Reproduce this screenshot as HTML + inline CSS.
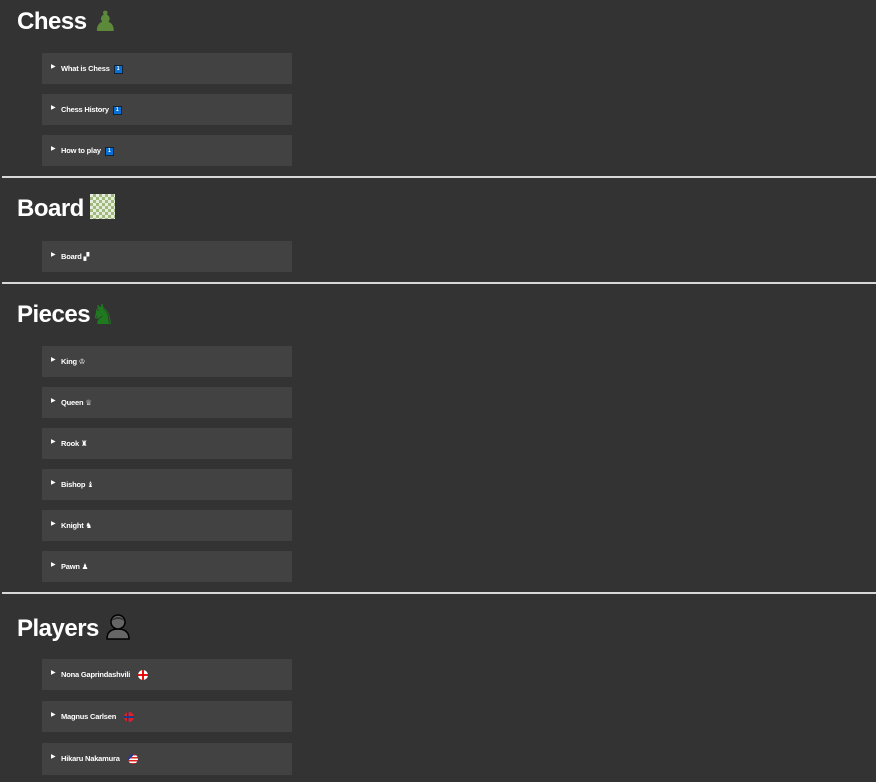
<!DOCTYPE html>
<html><head><meta charset="utf-8"><style>
body{margin:0;width:876px;height:782px;background:#333;overflow:hidden;font-family:"Liberation Sans","DejaVu Sans",sans-serif;color:#fff;position:relative}
h1{position:absolute;left:17px;margin:0;font-size:24px;font-weight:bold;line-height:30px;letter-spacing:-0.5px}
.it{position:absolute;left:42px;width:250px;height:31px;background:#424242;font-size:7.5px;font-weight:bold;line-height:31px;letter-spacing:-0.2px}
.it span.t{position:absolute;left:9px;top:-1px;font-size:6px}
.it span.x{position:absolute;left:19px}
.hr{position:absolute;left:2px;right:0;height:2px;background:#d8d8d8}
.b{display:inline-block;width:7px;height:7px;background:#0a6fd6;border:1px solid #123;vertical-align:middle;font-size:5px;line-height:7px;text-align:center;margin-left:2px}
.f{display:inline-block;width:10px;height:10px;border-radius:50%;vertical-align:middle;margin-left:6px}
.pc{font-size:28px;vertical-align:-2px}
</style></head><body>
<h1 style="top:7px">Chess <span class="pc" style="color:#5c8a3a">♟</span></h1>
<div class="it" style="top:53px"><span class="t">▶</span><span class="x">What is Chess <span class="b">1</span></span></div>
<div class="it" style="top:94px"><span class="t">▶</span><span class="x">Chess History <span class="b">1</span></span></div>
<div class="it" style="top:135px"><span class="t">▶</span><span class="x">How to play <span class="b">1</span></span></div>
<div class="hr" style="top:176px"></div>
<h1 style="top:194px">Board <span style="display:inline-block;width:25px;height:25px;vertical-align:-3px;background:repeating-conic-gradient(#9fba7c 0 25%,#e6eddc 0 50%) 0 0/6px 6px"></span></h1>
<div class="it" style="top:241px"><span class="t">▶</span><span class="x">Board ▞</span></div>
<div class="hr" style="top:282px"></div>
<h1 style="top:300px">Pieces<span class="pc" style="color:#1f7a1f">♞</span></h1>
<div class="it" style="top:346px"><span class="t">▶</span><span class="x">King ♔</span></div>
<div class="it" style="top:387px"><span class="t">▶</span><span class="x">Queen ♕</span></div>
<div class="it" style="top:428px"><span class="t">▶</span><span class="x">Rook ♜</span></div>
<div class="it" style="top:469px"><span class="t">▶</span><span class="x">Bishop ♝</span></div>
<div class="it" style="top:510px"><span class="t">▶</span><span class="x">Knight ♞</span></div>
<div class="it" style="top:551px"><span class="t">▶</span><span class="x">Pawn ♟</span></div>
<div class="hr" style="top:592px"></div>
<h1 style="top:612px">Players <svg width="26" height="28" viewBox="0 0 26 28" style="vertical-align:-4px"><path d="M2 27 Q2 17 13 17 Q24 17 24 27Z" fill="#666" stroke="#000" stroke-width="1.5"/><circle cx="13" cy="10" r="7" fill="#666" stroke="#000" stroke-width="1.5"/><path d="M6.5 9 Q9 5 13 5 Q17 5 19.5 9 Q16 7 13 7 Q10 7 6.5 9Z" fill="#333"/></svg></h1>
<div class="it" style="top:659px"><span class="t">▶</span><span class="x">Nona Gaprindashvili <span class="f" style="background-image:linear-gradient(#fff 40%,#e11 40% 60%,#fff 60%),linear-gradient(90deg,#fff 40%,#e11 40% 60%,#fff 60%);background-blend-mode:multiply"></span></span></div>
<div class="it" style="top:701px"><span class="t">▶</span><span class="x">Magnus Carlsen <span class="f" style="background-image:linear-gradient(transparent 40%,#1a3a8a 40% 60%,transparent 60%),linear-gradient(90deg,#d22 30%,#1a3a8a 30% 45%,#d22 45%)"></span></span></div>
<div class="it" style="top:743px;height:32px"><span class="t">▶</span><span class="x">Hikaru Nakamura <span class="f" style="background:linear-gradient(135deg,#2a3a8a 35%,transparent 35%),repeating-linear-gradient(#d22 0 1.5px,#fff 1.5px 3px)"></span></span></div>
</body></html>
